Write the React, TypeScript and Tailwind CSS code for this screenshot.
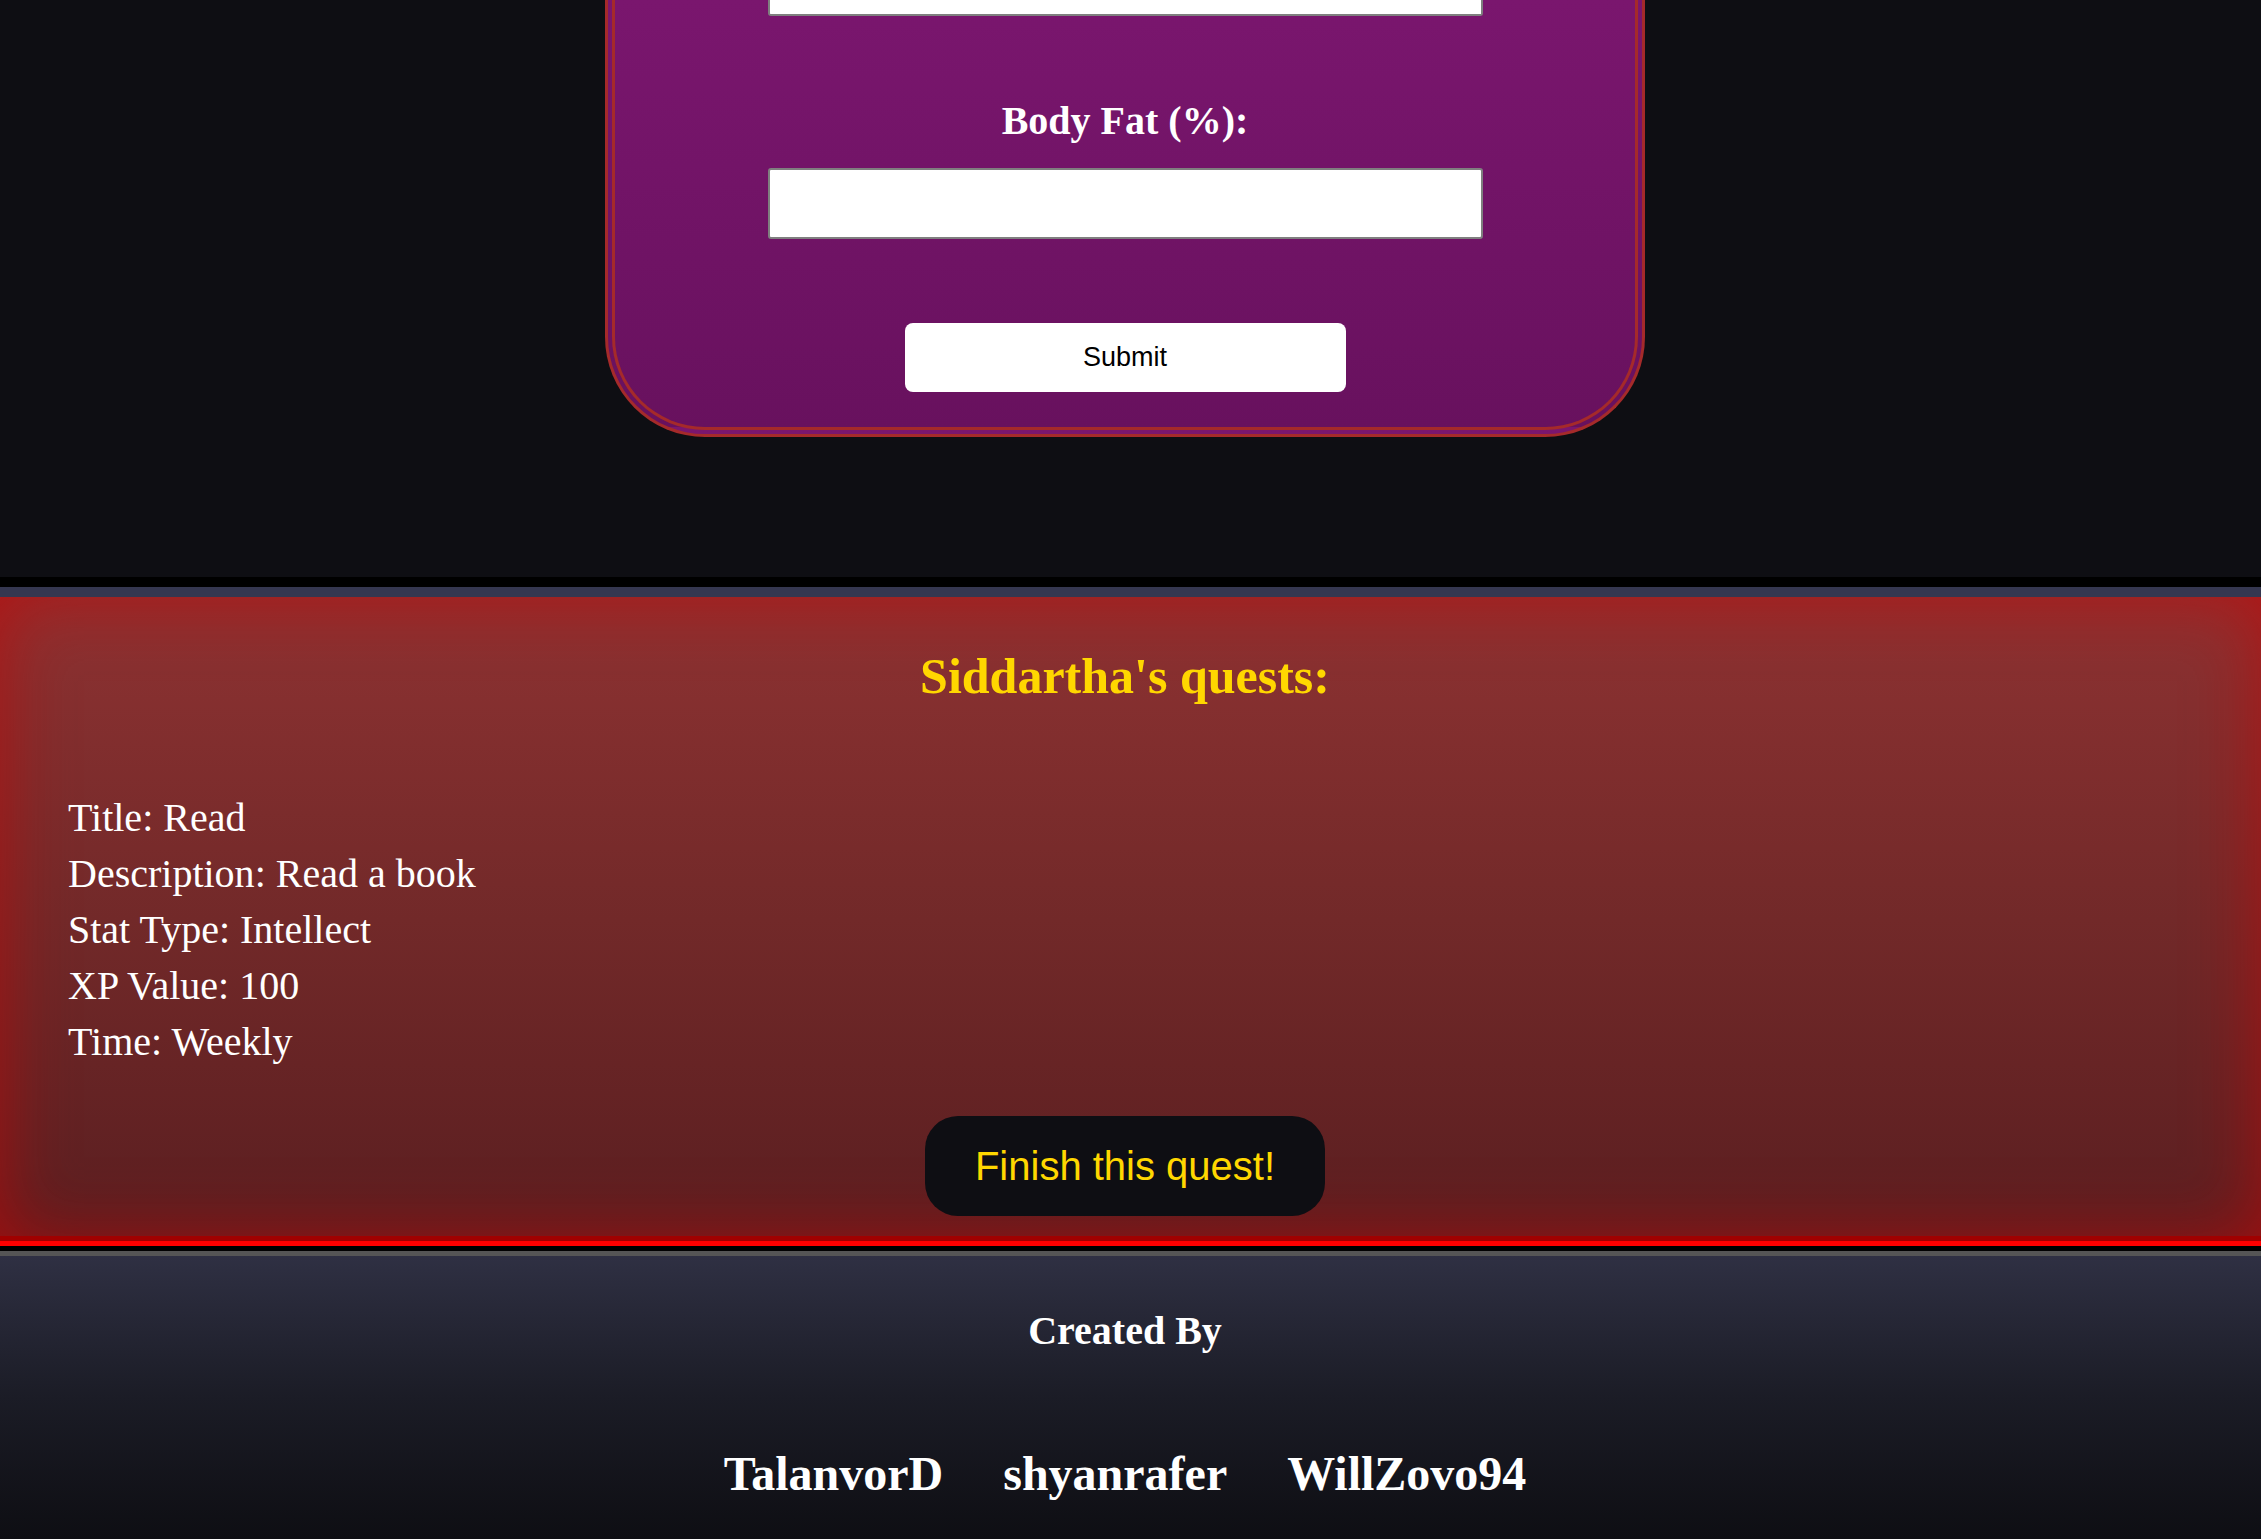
import React from "react";

const quest = [
  { label: "Title", value: "Read" },
  { label: "Description", value: "Read a book" },
  { label: "Stat Type", value: "Intellect" },
  { label: "XP Value", value: "100" },
  { label: "Time", value: "Weekly" },
];

const creators = ["TalanvorD", "shyanrafer", "WillZovo94"];

const serif = "font-['Liberation_Serif','Times_New_Roman',serif]";
const sans = "font-['Liberation_Sans',Arial,sans-serif]";

export default function App() {
  return (
    <main className={`min-h-screen w-full bg-[#0e0e13] ${serif}`}>
      {/* Stats form (scrolled, only the tail is visible) */}
      <section className="flex justify-center pr-[11px] pb-[140px]">
        <form
          className="flex w-[1040px] flex-col items-center rounded-b-[100px] border-[10px] border-t-0 border-double border-[#a52a2a] bg-gradient-to-b from-[#7a166e] to-[#68115e] pb-[35px]"
          onSubmit={(e) => e.preventDefault()}
        >
          <div className="h-[16px] w-[715px] rounded-b-[3px] border-2 border-t-0 border-[#7f7f7f] bg-white" />

          <label className="mt-[82px] text-[40px] font-bold leading-[46px] text-white">
            Body Fat (%):
          </label>
          <input
            type="text"
            className="mt-[24px] h-[71px] w-[715px] rounded-[3px] border-2 border-[#7f7f7f] bg-white px-3 text-[27px] outline-none"
          />

          <button
            type="submit"
            className={`mt-[84px] h-[69px] w-[441px] rounded-[8px] bg-white text-[27px] text-black ${sans}`}
          >
            Submit
          </button>
        </form>
      </section>

      <div className="h-[10px] bg-black" />
      <div className="h-[10px] bg-[#353750]" />

      {/* Quest list */}
      <section className="border-b-[5px] border-b-[#ff0000] bg-gradient-to-b from-[#8e3232] via-[#722929] to-[#5a1e20] shadow-[inset_0_0_70px_rgba(190,10,10,0.75)]">
        <div className="pr-[11px] pt-[50px] pb-[20px]">
          <h2 className="text-center text-[50px] font-bold leading-[58px] text-[#ffd700]">
            Siddartha's quests:
          </h2>

          <ul className="mt-[85px] pl-[68px] text-[40px] leading-[56px] text-white">
            {quest.map((q) => (
              <li key={q.label}>
                {q.label}: {q.value}
              </li>
            ))}
          </ul>

          <div className="mt-[46px] flex justify-center">
            <button
              className={`h-[100px] w-[400px] rounded-[33px] bg-[#0e0e13] text-[40px] text-[#ffd700] ${sans}`}
            >
              Finish this quest!
            </button>
          </div>
        </div>
        <div className="h-[5px] bg-[#a00000]" />
      </section>

      <div className="h-[5px] bg-black" />
      <div className="h-[5px] bg-[#555555]" />

      {/* Footer */}
      <footer className="h-[283px] bg-gradient-to-b from-[#2f3043] via-[#1b1c26] to-[#0e0e13] pr-[11px] text-white">
        <h3 className="pt-[52px] text-center text-[40px] font-bold leading-[46px]">Created By</h3>
        <div className="mt-[92px] flex justify-center gap-[60px] text-[48px] font-bold leading-[56px]">
          {creators.map((c) => (
            <span key={c}>{c}</span>
          ))}
        </div>
      </footer>
    </main>
  );
}
